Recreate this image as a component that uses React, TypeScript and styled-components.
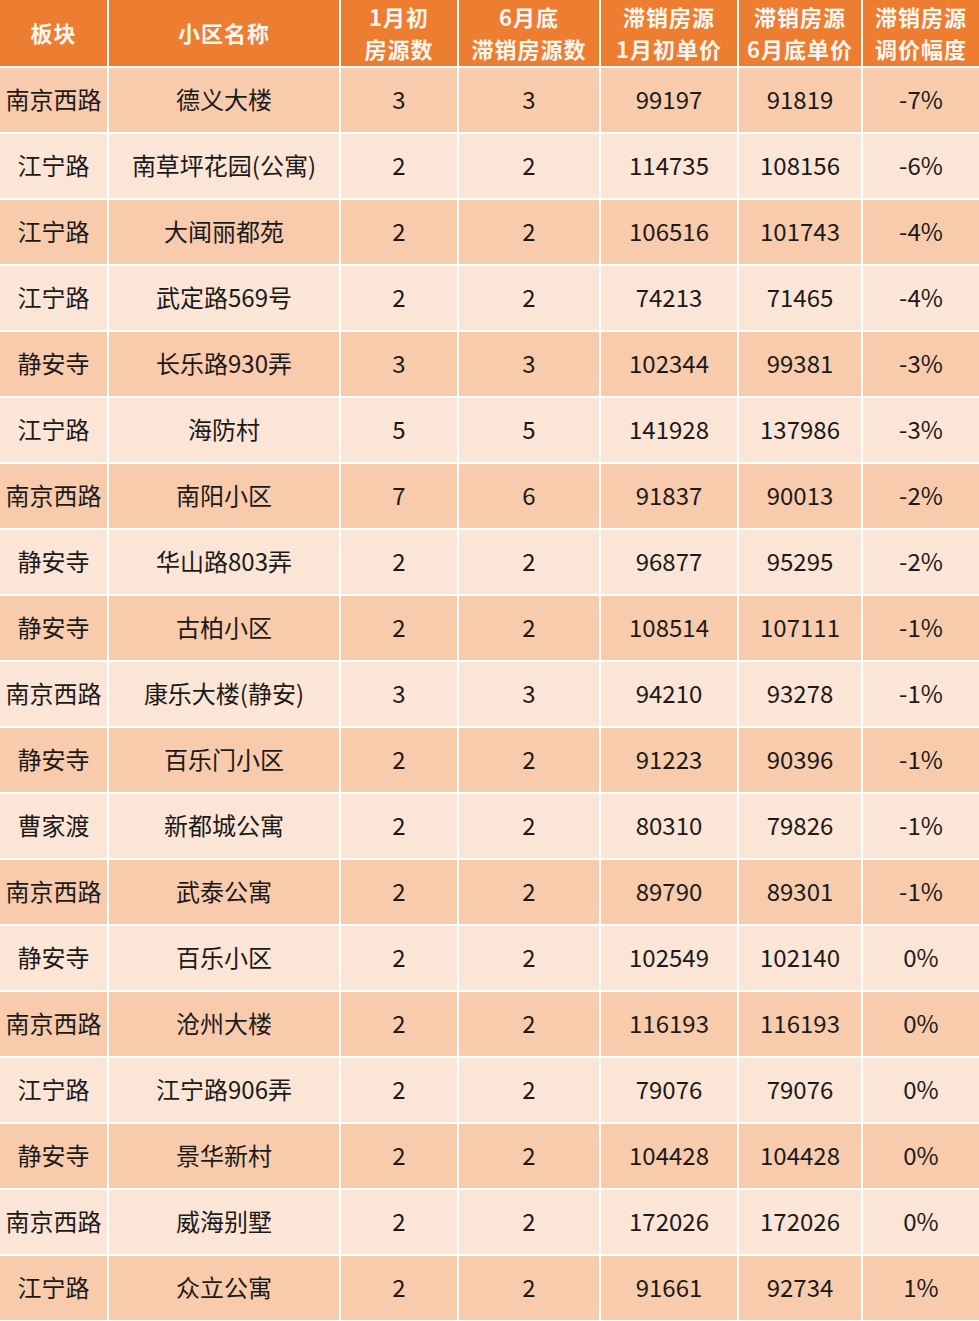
import * as React from "react";
import styled, { createGlobalStyle } from "styled-components";

const GlobalStyle = createGlobalStyle`
  html, body {
    margin: 0;
    padding: 0;
    background: #ffffff;
  }
`;

const HEADERS = [
  ["板块"],
  ["小区名称"],
  ["1月初", "房源数"],
  ["6月底", "滞销房源数"],
  ["滞销房源", "1月初单价"],
  ["滞销房源", "6月底单价"],
  ["滞销房源", "调价幅度"],
];

const ROWS: string[][] = [
  ["南京西路", "德义大楼", "3", "3", "99197", "91819", "-7%"],
  ["江宁路", "南草坪花园(公寓)", "2", "2", "114735", "108156", "-6%"],
  ["江宁路", "大闻丽都苑", "2", "2", "106516", "101743", "-4%"],
  ["江宁路", "武定路569号", "2", "2", "74213", "71465", "-4%"],
  ["静安寺", "长乐路930弄", "3", "3", "102344", "99381", "-3%"],
  ["江宁路", "海防村", "5", "5", "141928", "137986", "-3%"],
  ["南京西路", "南阳小区", "7", "6", "91837", "90013", "-2%"],
  ["静安寺", "华山路803弄", "2", "2", "96877", "95295", "-2%"],
  ["静安寺", "古柏小区", "2", "2", "108514", "107111", "-1%"],
  ["南京西路", "康乐大楼(静安)", "3", "3", "94210", "93278", "-1%"],
  ["静安寺", "百乐门小区", "2", "2", "91223", "90396", "-1%"],
  ["曹家渡", "新都城公寓", "2", "2", "80310", "79826", "-1%"],
  ["南京西路", "武泰公寓", "2", "2", "89790", "89301", "-1%"],
  ["静安寺", "百乐小区", "2", "2", "102549", "102140", "0%"],
  ["南京西路", "沧州大楼", "2", "2", "116193", "116193", "0%"],
  ["江宁路", "江宁路906弄", "2", "2", "79076", "79076", "0%"],
  ["静安寺", "景华新村", "2", "2", "104428", "104428", "0%"],
  ["南京西路", "威海别墅", "2", "2", "172026", "172026", "0%"],
  ["江宁路", "众立公寓", "2", "2", "91661", "92734", "1%"],
];

const App: React.FC = () => (
  <>
    <GlobalStyle />
    <Table>
      {HEADERS.map((lines, i) => (
        <HeadCell key={"h" + i}>
          {lines.map((l, j) => (
            <HeadLine key={j}>{l}</HeadLine>
          ))}
        </HeadCell>
      ))}
      {ROWS.map((row, r) =>
        row.map((val, c) => (
          <Cell key={r + "-" + c} light={r % 2 === 1}>
            {val}
          </Cell>
        ))
      )}
    </Table>
  </>
);

export default App;

const Table = styled.div`
  display: grid;
  grid-template-columns: 107px 230px 116px 140px 136px 122px 116px;
  grid-template-rows: 66px;
  grid-auto-rows: 64px;
  column-gap: 2px;
  row-gap: 2px;
  width: 979px;
  background: #ffffff;
  font-family: "Noto Sans CJK SC", "Noto Sans", sans-serif;
`;

const HeadCell = styled.div`
  display: flex;
  flex-direction: column;
  align-items: center;
  justify-content: center;
  padding-bottom: 2px;
  background: #ed7d31;
  color: #fdf6ef;
  font-size: 22px;
  font-weight: bold;
  letter-spacing: 1px;
  white-space: nowrap;
`;

const HeadLine = styled.div`
  line-height: 32px;
  height: 32px;
`;

interface CellProps {
  light?: boolean;
}

const Cell = styled.div.withConfig({
  shouldForwardProp: (p) => p !== "light",
})<CellProps>`
  display: flex;
  align-items: center;
  justify-content: center;
  padding-bottom: 4px;
  background: #f8cbad;
  color: #1c1a19;
  font-size: 24px;
  white-space: nowrap;
  ${(props) => props.light && `background: #fbe5d6;`}
`;
